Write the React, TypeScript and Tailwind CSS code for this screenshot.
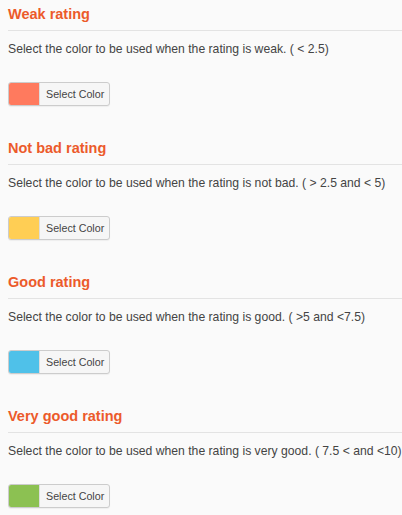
const sections = [
  { title: "Weak rating", text: "Select the color to be used when the rating is weak. ( < 2.5)", color: "bg-[#ff7a5e]" },
  { title: "Not bad rating", text: "Select the color to be used when the rating is not bad. ( > 2.5 and < 5)", color: "bg-[#ffce54]" },
  { title: "Good rating", text: "Select the color to be used when the rating is good. ( >5 and <7.5)", color: "bg-[#4fc1e9]" },
  { title: "Very good rating", text: "Select the color to be used when the rating is very good. ( 7.5 < and <10)", color: "bg-[#8cc152]" },
];

export default function App() {
  return (
    <div className="min-h-[515px] w-[402px] bg-[#fafafa] pl-2 pt-1 font-['Liberation_Sans',Arial,sans-serif]">
      {sections.map((s, i) => (
        <div key={s.title} className={i > 0 ? "mt-8" : ""}>
          <h3 className="border-b border-[#e3e3e3] pb-[6px] text-[14.5px] font-bold leading-5 text-[#ec5a2b]">
            {s.title}
          </h3>
          <p className="mt-[9px] whitespace-nowrap text-[12.2px] leading-[18px] text-[#444]">{s.text}</p>
          <button className="mt-6 flex h-6 w-[102px] items-center rounded-[3px] border border-[#ccc] bg-[#f6f6f6] p-0 shadow-[0_1px_1px_rgba(0,0,0,0.05)]">
            <span className={`h-full w-[31px] rounded-l-[2px] border-r border-[#ddd] ${s.color}`} />
            <span className="ml-[6px] text-[10.7px] text-[#444]">Select Color</span>
          </button>
        </div>
      ))}
    </div>
  );
}
